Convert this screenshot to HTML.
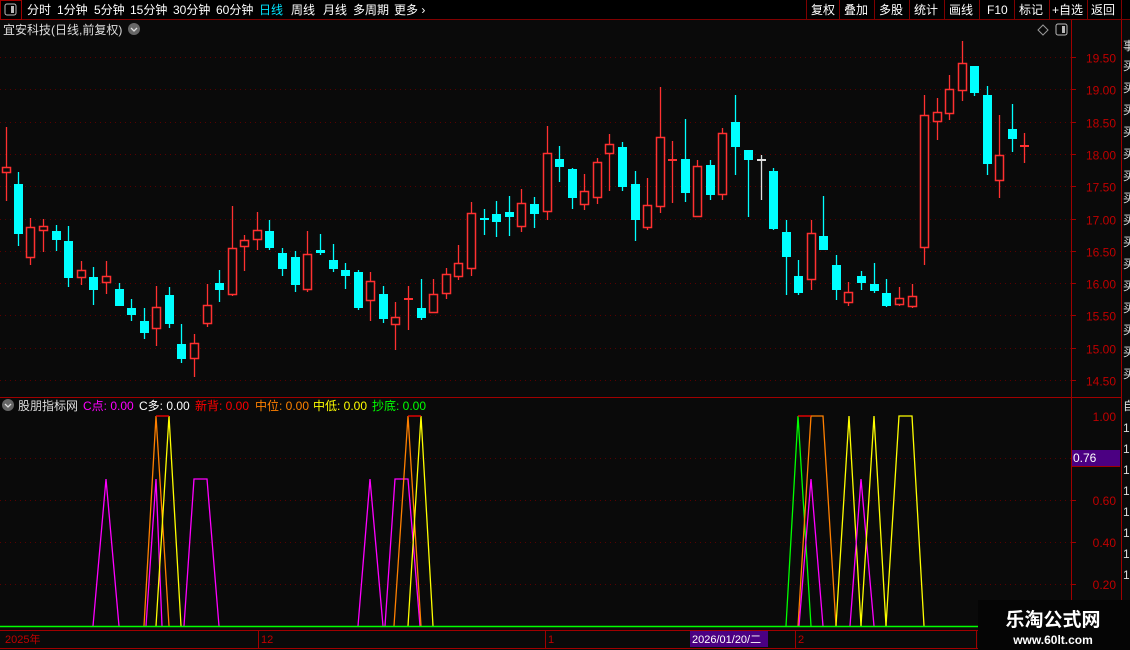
<!DOCTYPE html>
<html><head><meta charset="utf-8"><style>
html,body{margin:0;padding:0;background:#0a0a0a;width:1130px;height:650px;overflow:hidden;font-family:"Liberation Sans","Noto Sans CJK SC",sans-serif}
svg{position:absolute;left:0;top:0}
text{font-family:"Liberation Sans","Noto Sans CJK SC",sans-serif}
</style></head><body>
<svg id="s" width="1130" height="650" xmlns="http://www.w3.org/2000/svg">
<rect width="1130" height="650" fill="#0a0a0a"/>
<rect x="0" y="0" width="1130" height="20" fill="#000"/>
<line x1="0" y1="19.5" x2="1130" y2="19.5" stroke="#800000"/>
<rect x="0.5" y="0.5" width="21" height="19" fill="none" stroke="#a00000"/>
<rect x="5" y="4" width="11" height="11" rx="2" fill="none" stroke="#bbb"/>
<rect x="11" y="6" width="3" height="7" fill="#bbb"/>
<g font-size="12" fill="#fff">
<text x="27" y="14">分时</text><text x="57" y="14">1分钟</text><text x="94" y="14">5分钟</text><text x="130" y="14">15分钟</text><text x="173" y="14">30分钟</text><text x="216" y="14">60分钟</text>
<text x="259" y="14" fill="#00e5ff">日线</text><text x="291" y="14">周线</text><text x="323" y="14">月线</text><text x="353" y="14">多周期</text><text x="394" y="14">更多 ›</text>
<text x="811" y="14">复权</text><text x="844" y="14">叠加</text><text x="879" y="14">多股</text><text x="914" y="14">统计</text><text x="949" y="14">画线</text><text x="987" y="14">F10</text><text x="1019" y="14">标记</text><text x="1052" y="14">+自选</text><text x="1091" y="14">返回</text>
</g>
<g stroke="#800000"><line x1="806.5" y1="0" x2="806.5" y2="19"/><line x1="839.5" y1="0" x2="839.5" y2="19"/><line x1="874.5" y1="0" x2="874.5" y2="19"/><line x1="909.5" y1="0" x2="909.5" y2="19"/><line x1="944.5" y1="0" x2="944.5" y2="19"/><line x1="979.5" y1="0" x2="979.5" y2="19"/><line x1="1014.5" y1="0" x2="1014.5" y2="19"/><line x1="1049.5" y1="0" x2="1049.5" y2="19"/><line x1="1087.5" y1="0" x2="1087.5" y2="19"/><line x1="1121.5" y1="0" x2="1121.5" y2="19"/></g>
<text x="3" y="34" font-size="12" fill="#ddd">宜安科技(日线,前复权)</text>
<circle cx="134" cy="29" r="6" fill="#666"/><path d="M131 28 L134 31 L137 28" stroke="#ddd" fill="none" stroke-width="1.3"/>
<path d="M1043 25 L1048 30 L1043 35 L1038 30 Z" fill="none" stroke="#999"/>
<rect x="1056" y="24" width="11" height="11" rx="2" fill="none" stroke="#bbb"/><rect x="1062" y="26" width="3" height="7" fill="#bbb"/>
<line x1="1071.5" y1="20" x2="1071.5" y2="630" stroke="#a00000"/>
<line x1="1121.5" y1="20" x2="1121.5" y2="650" stroke="#a00000"/>
<line x1="0" y1="397.5" x2="1121" y2="397.5" stroke="#a00000"/>
<g id="grid"></g>
<g id="candles"></g>
<circle cx="8" cy="405" r="6" fill="#666"/><path d="M5 404 L8 407 L11 404" stroke="#ddd" fill="none" stroke-width="1.3"/>
<g font-size="12"><text x="18" y="410" fill="#ddd">股朋指标网</text><text x="83" y="410" fill="#ff00ff">C点: 0.00</text><text x="139" y="410" fill="#fff">C多: 0.00</text><text x="195" y="410" fill="#ff0000">新背: 0.00</text><text x="255" y="410" fill="#ff8000">中位: 0.00</text><text x="313" y="410" fill="#ffff00">中低: 0.00</text><text x="372" y="410" fill="#00ff00">抄底: 0.00</text></g>
<g fill="none" stroke-width="1.3">
<polyline stroke="#ff00ff" points="93,626 106,479 119,626"/>
<polyline stroke="#ff00ff" points="146,626 156,479 162,626"/>
<polyline stroke="#ff00ff" points="184,626 194,479 207,479 219,626"/>
<polyline stroke="#ff8000" points="144,626 156,416 169,626"/>
<polyline stroke="#ffff00" points="156,626 169,416 181,626"/>
<line stroke="#ff0000" x1="156" y1="416" x2="169" y2="416"/>
<polyline stroke="#ff00ff" points="358,626 370,479 383,626"/>
<polyline stroke="#ff00ff" points="385,626 395,479 408,479 420,626"/>
<polyline stroke="#ff8000" points="394,626 408,416 421,626"/>
<polyline stroke="#ffff00" points="408,626 421,416 433,626"/>
<line stroke="#ff0000" x1="408" y1="416" x2="421" y2="416"/>
<polyline stroke="#00ff00" points="786,626 798,416 811,626"/>
<polyline stroke="#ff8000" points="798,626 811,416 823,416 836,626"/>
<line stroke="#ff0000" x1="798" y1="416" x2="811" y2="416"/>
<polyline stroke="#ff00ff" points="799,626 811,479 823,626"/>
<polyline stroke="#ffff00" points="836,626 849,416 861,626"/>
<polyline stroke="#ff00ff" points="850,626 861,479 874,626"/>
<polyline stroke="#ffff00" points="861,626 874,416 886,626"/>
<polyline stroke="#ffff00" points="886,626 899,416 912,416 924,626"/>
</g>
<line x1="0" y1="626.5" x2="1071" y2="626.5" stroke="#00ff00" stroke-width="1.5"/>
<g font-size="12" fill="#c00000" text-anchor="end"><text x="1116" y="421">1.00</text><text x="1116" y="505">0.60</text><text x="1116" y="547">0.40</text><text x="1116" y="589">0.20</text></g>
<rect x="1072" y="450" width="48" height="16" fill="#4b0082"/><line x1="1072" y1="466.5" x2="1120" y2="466.5" stroke="#a00000"/>
<text x="1073" y="462" font-size="12" fill="#fff">0.76</text>
<rect x="0" y="630" width="1071" height="20" fill="#0a0a0a"/>
<line x1="0" y1="630.5" x2="1071" y2="630.5" stroke="#a00000"/>
<line x1="0" y1="648.5" x2="1071" y2="648.5" stroke="#a00000"/>
<g stroke="#a00000"><line x1="258.5" y1="630" x2="258.5" y2="648"/><line x1="545.5" y1="630" x2="545.5" y2="648"/><line x1="795.5" y1="630" x2="795.5" y2="648"/><line x1="976.5" y1="630" x2="976.5" y2="648"/></g>
<g font-size="11" fill="#c00000"><text x="5" y="643">2025年</text><text x="261" y="643">12</text><text x="548" y="643">1</text><text x="798" y="643">2</text></g>
<rect x="690" y="631" width="78" height="16" fill="#4b0082"/><text x="692" y="643" font-size="11" fill="#fff">2026/01/20/二</text>
<g font-size="12" fill="#ddd"><text x="1123" y="50">事</text><text x="1123" y="410">自</text></g>
<g id="rc" font-size="12" fill="#ddd"></g>
<rect x="978" y="600" width="152" height="50" fill="#050505"/>
<text x="1053" y="626" font-size="19" font-weight="bold" fill="#fff" text-anchor="middle" font-family="Noto Serif CJK SC,serif">乐淘公式网</text>
<text x="1053" y="644" font-size="12" font-weight="bold" fill="#fff" text-anchor="middle" font-family="Liberation Serif,serif">www.60lt.com</text>
</svg>
<script>
var NS="http://www.w3.org/2000/svg",g=document.getElementById('grid'),c=document.getElementById('candles');
function el(p,t,a){var e=document.createElementNS(NS,t);for(var k in a)e.setAttribute(k,a[k]);p.appendChild(e);return e;}
var labs=["19.50","19.00","18.50","18.00","17.50","17.00","16.50","16.00","15.50","15.00","14.50"];
for(var i=0;i<11;i++){var y=Math.round(57+i*32.3)+0.5;el(g,'line',{x1:0,y1:y,x2:1071,y2:y,stroke:'#5a0000','stroke-dasharray':'1 4'});
el(g,'line',{x1:1071,y1:y,x2:1076,y2:y,stroke:'#a00000'});
var t=el(g,'text',{x:1116,y:y+5,'font-size':12,fill:'#c00000','text-anchor':'end'});t.textContent=labs[i];}
[458,500,542,584].forEach(function(y){el(g,'line',{x1:0,y1:y+.5,x2:1071,y2:y+.5,stroke:'#5a0000','stroke-dasharray':'1 4'});el(g,'line',{x1:1071,y1:y+.5,x2:1076,y2:y+.5,stroke:'#a00000'});});
var d=[
[5.5,'r',127,167,173,201],[18,'c',172,184,234,246],[30,'r',218,227,258,265],[43,'r',219,226,231,252],[56,'c',225,231,240,251],[68,'c',226,241,278,287],[81,'r',261,270,278,285],[93,'c',267,277,290,305],[106,'r',261,276,283,294],[119,'c',283,289,306,306],[131,'c',299,308,315,321],[144,'c',308,321,333,339],[156,'r',286,307,329,346],[169,'c',287,295,324,328],[181,'c',324,344,359,363],[194,'r',334,343,359,377],[207,'r',284,305,324,327],[219,'c',270,283,290,302],[232,'r',206,248,295,296],[244,'r',235,240,247,271],[257,'r',212,230,240,250],[269,'c',220,231,248,250],[282,'c',248,253,269,276],[295,'c',251,257,285,292],[307,'r',231,254,290,292],[320,'c',234,250,253,255],[333,'c',244,260,269,272],[345,'c',263,270,276,289],[358,'c',270,272,308,310],[370,'r',272,281,301,321],[383,'c',286,294,319,323],[395,'r',302,317,325,350],[408,'r',286,298,300,330],[421,'c',279,308,318,320],[433,'r',279,294,313,313],[446,'r',268,274,294,299],[458,'r',245,263,277,280],[471,'r',202,213,269,276],[484,'c',209,218,220,235],[496,'c',201,214,222,237],[509,'c',196,212,217,236],[521,'r',189,203,227,232],[534,'c',197,204,214,228],[547,'r',126,153,212,220],[559,'c',146,159,167,182],[572,'c',168,169,198,209],[584,'r',174,191,205,210],[597,'r',158,162,198,204],[609,'r',134,144,154,191],[622,'c',142,147,187,191],[635,'c',171,184,220,241],[647,'r',178,205,228,230],[660,'r',87,137,207,213],[672,'r',141,159,161,203],[685,'c',119,159,193,202],[697,'r',160,166,217,217],[710,'c',160,165,195,200],[722,'r',128,133,195,200],[735,'c',95,122,147,175],[748,'c',150,150,160,217],[761,'w',155,159,161,200],[773,'c',168,171,229,230],[786,'c',220,232,257,295],[798,'c',260,276,293,295],[811,'r',220,233,280,290],[823,'c',196,236,250,250],[836,'c',255,265,290,300],[848,'r',282,292,303,306],[861,'c',271,276,283,290],[874,'c',263,284,291,293],[886,'c',279,293,306,307],[899,'r',287,298,305,306],[912,'r',284,296,307,308],[924,'r',95,115,248,265],[937,'r',98,112,122,140],[949,'r',75,89,114,120],[962,'r',41,63,91,101],[974,'c',66,66,93,96],[987,'c',86,95,164,175],[999,'r',115,155,181,198],[1012,'c',104,129,139,152],[1024,'r',133,145,147,163]];
d.forEach(function(k){var x=Math.round(k[0]),col=k[1]=='c'?'#00ffff':(k[1]=='w'?'#dddddd':'#ff3030');
el(c,'line',{x1:x+.5,y1:k[2],x2:x+.5,y2:k[5],stroke:col,'stroke-width':1.3});
var h=Math.max(k[4]-k[3],2);
if(k[1]=='c')el(c,'rect',{x:x-4,y:k[3],width:9,height:h,fill:col});
else if(h<=3)el(c,'rect',{x:x-4,y:k[3],width:9,height:2,fill:col});
else el(c,'rect',{x:x-3.5,y:k[3]+.5,width:8,height:h-1,fill:'#0a0a0a',stroke:col,'stroke-width':1.5});});
var rc=document.getElementById('rc');
for(var y=70;y<395;y+=22){var t=el(rc,'text',{x:1123,y:y});t.textContent='买';}
for(var y=432;y<600;y+=21){var t=el(rc,'text',{x:1123,y:y});t.textContent='1';}
</script>
</body></html>
